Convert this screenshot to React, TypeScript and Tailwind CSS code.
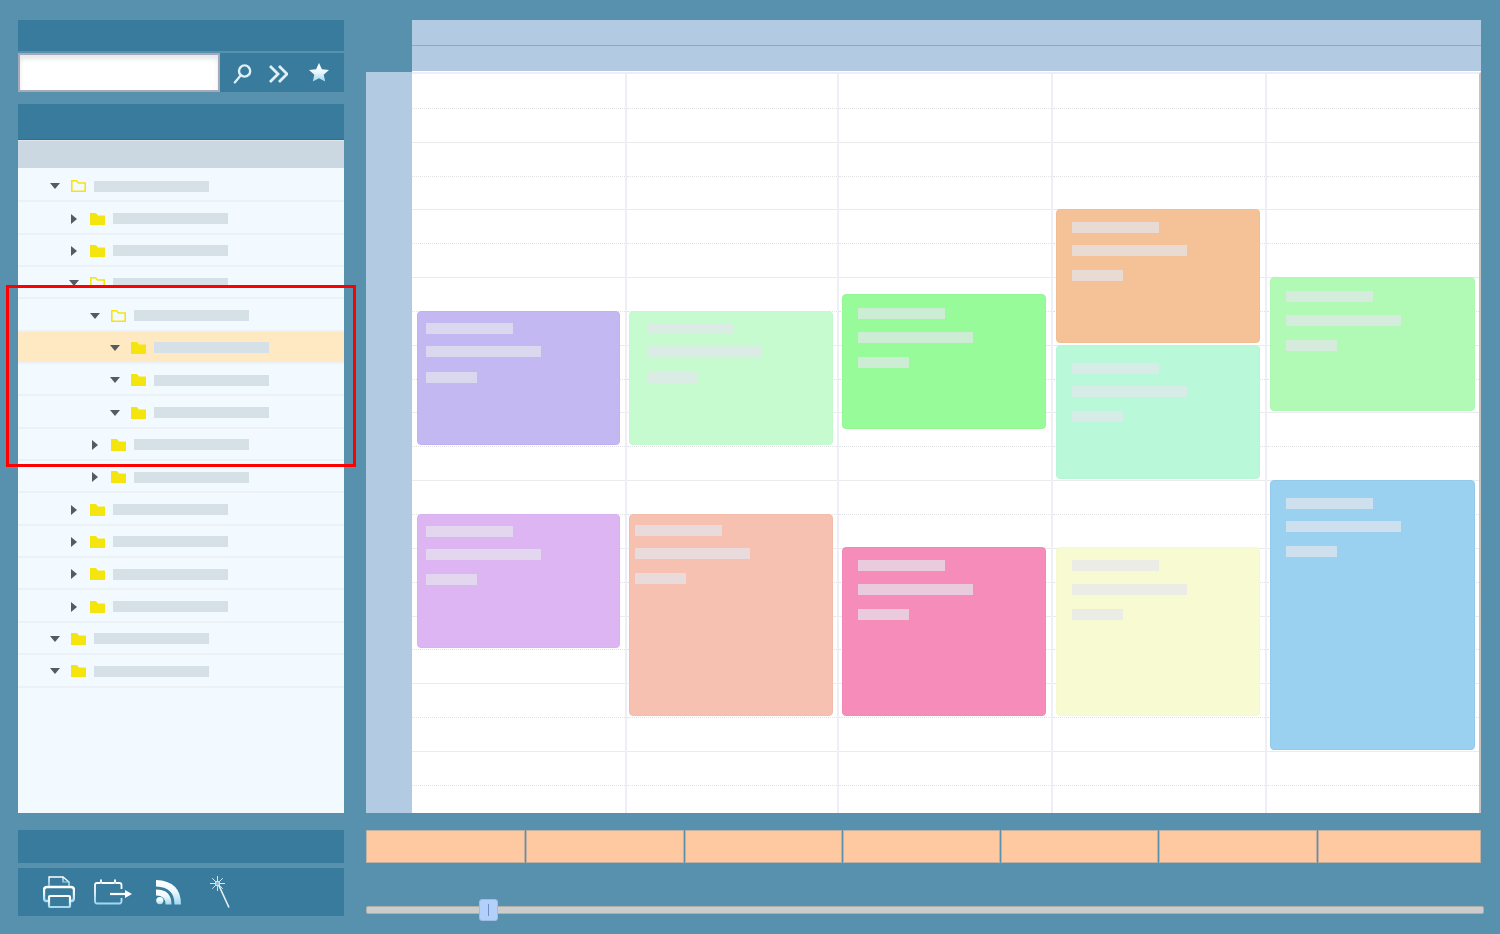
type TreeRow = { indent: string; open: boolean; outline: boolean; active?: boolean; clipped?: boolean }

const treeRows: TreeRow[] = [
  { indent: 'pl-[32px]', open: true, outline: true },
  { indent: 'pl-[51px]', open: false, outline: false },
  { indent: 'pl-[51px]', open: false, outline: false },
  { indent: 'pl-[51px]', open: true, outline: true, clipped: true },
  { indent: 'pl-[72px]', open: true, outline: true },
  { indent: 'pl-[92px]', open: true, outline: false, active: true },
  { indent: 'pl-[92px]', open: true, outline: false },
  { indent: 'pl-[92px]', open: true, outline: false },
  { indent: 'pl-[72px]', open: false, outline: false },
  { indent: 'pl-[72px]', open: false, outline: false },
  { indent: 'pl-[51px]', open: false, outline: false },
  { indent: 'pl-[51px]', open: false, outline: false },
  { indent: 'pl-[51px]', open: false, outline: false },
  { indent: 'pl-[51px]', open: false, outline: false },
  { indent: 'pl-[32px]', open: true, outline: false },
  { indent: 'pl-[32px]', open: true, outline: false },
]

type CalEvent = { box: string; pad: string; gap1: string; gap2: string }

const columns: { width: string; events: CalEvent[] }[] = [
  {
    width: 'w-[215px]',
    events: [
      { box: 'left-[5px] top-[237px] w-[203px] h-[134px] bg-[#c4b8f3] border-[#bfb2f3]', pad: 'pl-[8px] pt-[11px]', gap1: 'mt-[12px]', gap2: 'mt-[15px]' },
      { box: 'left-[5px] top-[440px] w-[203px] h-[134px] bg-[#ddb5f2] border-[#d9b0f1]', pad: 'pl-[8px] pt-[11px]', gap1: 'mt-[12px]', gap2: 'mt-[14px]' },
    ],
  },
  {
    width: 'w-[212px]',
    events: [
      { box: 'left-[2px] top-[237px] w-[204px] h-[134px] bg-[#c6fbcf] border-[#c3f9cc]', pad: 'pl-[17px] pt-[11px]', gap1: 'mt-[12px]', gap2: 'mt-[15px]' },
      { box: 'left-[2px] top-[440px] w-[204px] h-[202px] bg-[#f6c1b1] border-[#f3bdac]', pad: 'pl-[5px] pt-[10px]', gap1: 'mt-[12px]', gap2: 'mt-[14px]' },
    ],
  },
  {
    width: 'w-[214px]',
    events: [
      { box: 'left-[3px] top-[220px] w-[204px] h-[135px] bg-[#98fb9a] border-[#94f796]', pad: 'pl-[15px] pt-[13px]', gap1: 'mt-[13px]', gap2: 'mt-[14px]' },
      { box: 'left-[3px] top-[473px] w-[204px] h-[169px] bg-[#f68cb9] border-[#f388b6]', pad: 'pl-[15px] pt-[12px]', gap1: 'mt-[13px]', gap2: 'mt-[14px]' },
    ],
  },
  {
    width: 'w-[214px]',
    events: [
      { box: 'left-[3px] top-[135px] w-[204px] h-[134px] bg-[#f5c197] border-[#f2bd92]', pad: 'pl-[15px] pt-[12px]', gap1: 'mt-[12px]', gap2: 'mt-[14px]' },
      { box: 'left-[3px] top-[271px] w-[204px] h-[134px] bg-[#b9f9d9] border-[#b6f6d6]', pad: 'pl-[15px] pt-[17px]', gap1: 'mt-[12px]', gap2: 'mt-[14px]' },
      { box: 'left-[3px] top-[473px] w-[204px] h-[169px] bg-[#f8fad2] border-[#f6f8ce]', pad: 'pl-[15px] pt-[12px]', gap1: 'mt-[13px]', gap2: 'mt-[14px]' },
    ],
  },
  {
    width: 'flex-1',
    events: [
      { box: 'left-[3px] top-[203px] w-[205px] h-[134px] bg-[#b1fab5] border-[#adf7b1]', pad: 'pl-[15px] pt-[13px]', gap1: 'mt-[13px]', gap2: 'mt-[14px]' },
      { box: 'left-[3px] top-[406px] w-[205px] h-[270px] bg-[#9ad0f0] border-[#93caec]', pad: 'pl-[15px] pt-[17px]', gap1: 'mt-[12px]', gap2: 'mt-[14px]' },
    ],
  },
]

const slots = Array.from({ length: 22 }, (_, i) => i)
const footerCells = ['w-[159px]', 'w-[157.5px]', 'w-[157.5px]', 'w-[157px]', 'w-[157px]', 'w-[158px]', 'flex-1']

function Gradient({ id }: { id: string }) {
  return (
    <defs>
      <linearGradient id={id} x1="0" y1="0" x2="0" y2="1">
        <stop offset="0" stopColor="#ffffff" />
        <stop offset="0.45" stopColor="#eef9fd" />
        <stop offset="1" stopColor="#a0d8f0" />
      </linearGradient>
    </defs>
  )
}

function SearchIcon() {
  return (
    <svg width="20" height="23" viewBox="0 0 20 23" fill="none" stroke="#dff0f7" strokeWidth="2.4">
      <circle cx="12.6" cy="10" r="5.6" />
      <path d="M8.6 14.5 L2.8 21.5" strokeLinecap="round" strokeWidth="2.2" />
    </svg>
  )
}

function ForwardIcon() {
  return (
    <svg width="19" height="18" viewBox="0 0 19 18" fill="none" stroke="#dff0f7" strokeWidth="2.8">
      <path d="M1 1 L9 9 L1 17" />
      <path d="M10 1 L18 9 L10 17" />
    </svg>
  )
}

function StarIcon() {
  return (
    <svg width="20" height="19" viewBox="0 0 20 19">
      <Gradient id="star" />
      <path d="M10 0 L12.9 6.2 L20 7.1 L14.7 11.7 L16.2 18.6 L10 15.2 L3.8 18.6 L5.3 11.7 L0 7.1 L7.1 6.2 Z" fill="url(#star)" />
    </svg>
  )
}

function PrinterIcon() {
  return (
    <svg width="32" height="32" viewBox="0 0 32 32" fill="none" stroke="url(#printer)" strokeWidth="2">
      <Gradient id="printer" />
      <path d="M6 10 V1 H20 L26 6 V10" strokeWidth="1.4" />
      <path d="M20 1 V6 H26" strokeWidth="1.2" />
      <path d="M5 25 H4 Q1 25 1 22 V14 Q1 11 4 11 H28 Q31 11 31 14 V22 Q31 25 28 25 H27" strokeWidth="2.4" />
      <rect x="6" y="20" width="21" height="11" rx="1" strokeWidth="2.2" />
      <path d="M6 17 H27" strokeWidth="2.4" />
    </svg>
  )
}

function CalendarIcon() {
  return (
    <svg width="38" height="26" viewBox="0 0 38 26" fill="none" stroke="url(#calendar)" strokeWidth="1.8">
      <Gradient id="calendar" />
      <path d="M27.5 10 V6 Q27.5 4 25.5 4 H3 Q1 4 1 6 V22 Q1 24.5 3 24.5 H25.5 Q27.5 24.5 27.5 22 V19" />
      <path d="M7 0.5 V5 M21 0.5 V5" strokeWidth="2" />
      <path d="M16 15 H32" stroke="#ffffff" strokeWidth="2.2" />
      <path d="M31 11 L38 15 L31 19 Z" fill="#ffffff" stroke="none" />
    </svg>
  )
}

function RssIcon() {
  return (
    <svg width="25" height="25" viewBox="0 0 25 25" fill="none">
      <Gradient id="rss" />
      <circle cx="3.8" cy="20.6" r="3.6" fill="url(#rss)" />
      <path d="M0 9.5 Q15.5 9.5 15.5 24.5 H9.5 Q9.5 15.5 0 15.5 Z" fill="url(#rss)" />
      <path d="M0 0 Q25 1 25 24.5 H18.5 Q18.5 7 0 6.5 Z" fill="url(#rss)" />
    </svg>
  )
}

function WandIcon() {
  return (
    <svg width="20" height="32" viewBox="0 0 20 32" fill="none" stroke="#e6f2f7">
      <path d="M8 7.5 L19 31.5" strokeWidth="1.6" />
      <path d="M7.5 0 V15 M0 7.5 H15 M2.2 2.2 L12.8 12.8 M12.8 2.2 L2.2 12.8" strokeWidth="0.9" />
      <circle cx="7.5" cy="7.5" r="2.2" fill="#8fb6c9" stroke="#e6f2f7" strokeWidth="0.9" />
    </svg>
  )
}

function Arrow({ open }: { open: boolean }) {
  return (
    <div className="w-[10px] shrink-0">
      {open ? (
        <svg width="10" height="6" viewBox="0 0 10 6" className="block">
          <path d="M0 0 H10 L5 6 Z" fill="#555b60" />
        </svg>
      ) : (
        <svg width="6" height="10" viewBox="0 0 6 10" className="block ml-[2px]">
          <path d="M0 0 L6 5 L0 10 Z" fill="#555b60" />
        </svg>
      )}
    </div>
  )
}

function Folder({ outline }: { outline: boolean }) {
  return (
    <svg width="15" height="12" viewBox="0 0 15 12" className="ml-[11px] mr-[8px] shrink-0">
      {outline ? (
        <path d="M0.8 11.2 V0.8 H5.6 L7.4 3 H14.2 V11.2 Z" fill="none" stroke="#f5e50f" strokeWidth="1.6" />
      ) : (
        <path d="M0 12 V0 H6 L8 2.4 H15 V12 Z" fill="#f5e50f" />
      )}
    </svg>
  )
}

function Tree() {
  return (
    <div className="flex-1 bg-[#f3faff] pt-[2px]">
      {treeRows.map((row, i) => (
        <div
          key={i}
          className={`relative flex h-[32.35px] items-center border-b-2 border-[#ecf1f6] pt-[2px] ${row.indent} ${row.active ? 'bg-[#ffe9c2]' : ''}`}
        >
          <Arrow open={row.open} />
          <Folder outline={row.outline} />
          <div className="h-[11px] w-[115px] bg-[#d5e0e7]" />
          {row.clipped && <div className="absolute inset-x-0 bottom-0 h-[10px] bg-[#f3faff]" />}
        </div>
      ))}
    </div>
  )
}

function Sidebar() {
  return (
    <div className="flex w-[326px] shrink-0 flex-col">
      <div className="h-[31px] bg-[#387b9d]" />
      <div className="mt-[2px] flex h-[39px]">
        <div className="w-[202px] border-2 border-[#a8a8bb] bg-white shadow-[inset_0_4px_5px_#e4e8e8]" />
        <div className="flex flex-1 items-center bg-[#387b9d] pl-[12px]">
          <SearchIcon />
          <div className="ml-[17px] mt-[3px]">
            <ForwardIcon />
          </div>
          <div className="ml-[21px]">
            <StarIcon />
          </div>
        </div>
      </div>
      <div className="mt-[12px] h-[36px] border-b border-[#2f6f90] bg-[#387b9d]" />
      <div className="h-[28px] border-t border-[#dde4ea] bg-[#cbd8e1]" />
      <Tree />
      <div className="mt-[17px] h-[33px] bg-[#387b9d]" />
      <div className="mt-[5px] flex h-[48px] items-center bg-[#387b9d] pl-[25px]">
        <PrinterIcon />
        <div className="ml-[19px]">
          <CalendarIcon />
        </div>
        <div className="ml-[24px]">
          <RssIcon />
        </div>
        <div className="ml-[29px]">
          <WandIcon />
        </div>
      </div>
    </div>
  )
}

function Calendar() {
  return (
    <div className="flex min-h-0 flex-1">
      <div className="w-[46px] shrink-0 bg-[#b3cbe2]" />
      <div className="flex flex-1 overflow-hidden border-t-2 border-r-2 border-[#eeeff6] border-r-[#c4c4c4] bg-white">
        {columns.map((col, c) => (
          <div key={c} className={`relative h-full pt-px ${col.width} ${c < 4 ? 'border-r-2 border-[#eeeff6]' : ''}`}>
            {slots.map((s) => (
              <div
                key={s}
                className={`h-[33.85px] border-b ${s % 2 === 0 ? 'border-dotted border-[#e0e2e6]' : 'border-[#eaebef]'}`}
              />
            ))}
            {col.events.map((ev, e) => (
              <div key={e} className={`absolute rounded-[4px] border ${ev.box} ${ev.pad}`}>
                <div className="h-[11px] w-[87px] bg-[#e4e5ec]/70" />
                <div className={`h-[11px] w-[115px] bg-[#e4e5ec]/70 ${ev.gap1}`} />
                <div className={`h-[11px] w-[51px] bg-[#e4e5ec]/70 ${ev.gap2}`} />
              </div>
            ))}
          </div>
        ))}
      </div>
    </div>
  )
}

export default function App() {
  return (
    <div className="relative flex h-[934px] w-[1500px] overflow-hidden bg-[#5891ad] pb-[18px] pl-[18px] pt-[20px]">
      <Sidebar />
      <div className="ml-[22px] flex w-[1115px] flex-col">
        <div className="ml-[46px] h-[52px] border-b border-white bg-[#b3cbe2]">
          <div className="h-[26px] border-b border-[#8fa8bd]" />
        </div>
        <Calendar />
        <div className="mt-[17px] flex h-[33px] gap-px">
          {footerCells.map((w, i) => (
            <div key={i} className={`${w} border border-[#bfb2a4] bg-[#fec8a0]`} />
          ))}
        </div>
        <div className="relative mt-[43px] mb-[2px] h-[8px] w-[1118px] rounded-[2px] border border-[#b0b0aa] bg-[#cccccc]">
          <div className="absolute left-[112px] top-[-8px] flex h-[22px] w-[19px] items-center justify-center rounded-[3px] border border-[#9fbde8] bg-[#b3d0fb]">
            <div className="h-[12px] w-px bg-[#6d8fc6]" />
          </div>
        </div>
      </div>
      <div className="absolute left-[6px] top-[285px] h-[182px] w-[350px] border-[3px] border-[#ff0000]" />
    </div>
  )
}
